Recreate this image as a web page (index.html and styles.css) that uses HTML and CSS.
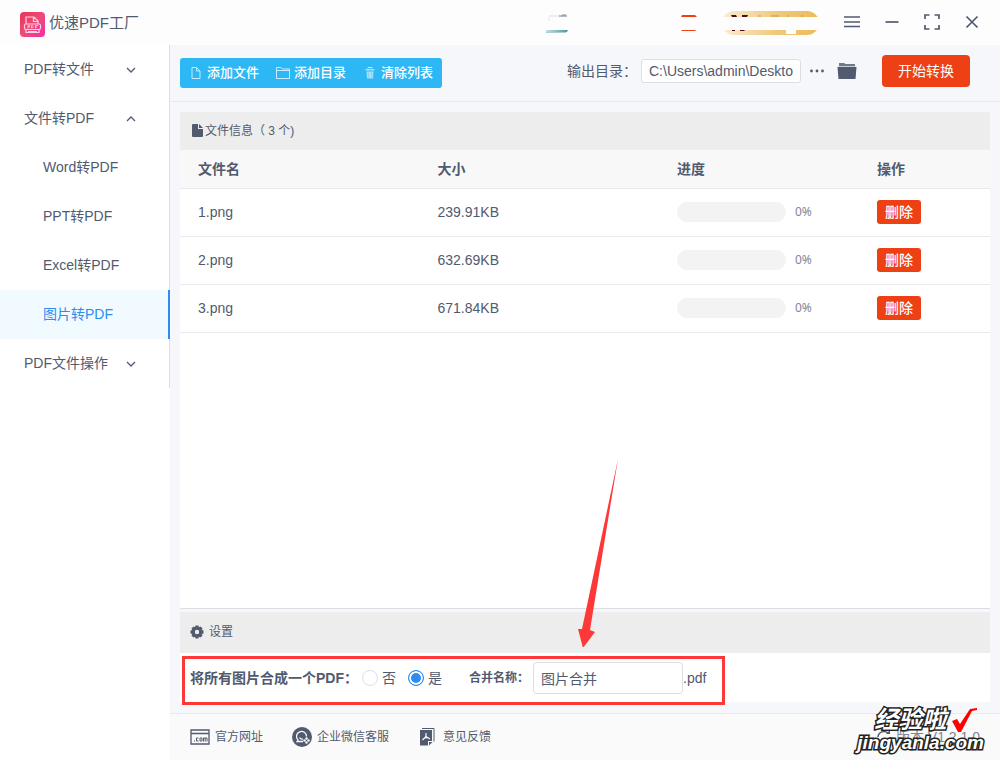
FILE: index.html
```html
<!DOCTYPE html>
<html lang="zh-CN">
<head>
<meta charset="utf-8">
<title>优速PDF工厂</title>
<link rel="stylesheet" href="styles.css">
</head>
<body>
<div class="app">
  <header class="titlebar">
    <svg class="logo" width="25" height="25" viewBox="0 0 25 25" aria-hidden="true">
      <defs><linearGradient id="lg" x1="0" y1="0" x2="1" y2="1"><stop offset="0" stop-color="#ea3458"/><stop offset=".5" stop-color="#ee4a78"/><stop offset="1" stop-color="#ee2fae"/></linearGradient></defs>
      <rect width="25" height="25" rx="4" fill="url(#lg)"/>
      <g fill="none" stroke="#fbd3de" stroke-width="1.2">
        <path d="M6 12V5h8l4 4v3M13.500 5v4.500H18"/>
        <rect x="4.500" y="12" width="16" height="5.500" rx="1.500"/>
        <path d="M6 17.500v3h13v-3M8 19.500h9"/>
        <path d="M8 16.500v-3h1.500v1.500H8M11.500 13.500v2.500h1l.8-1.200-.8-1.300zM15.500 16.500v-3H18M15.500 15H17" stroke-width=".8"/>
      </g>
    </svg>
    <h1 class="app-name">优速PDF工厂</h1>
    <svg class="promo" width="275" height="26" viewBox="0 0 275 26" aria-hidden="true">
      <defs>
        <linearGradient id="gold"><stop offset="0" stop-color="#fbedd2"/><stop offset=".55" stop-color="#f0c97e"/><stop offset="1" stop-color="#edbb58"/></linearGradient>
        <linearGradient id="teal"><stop offset="0" stop-color="#c4dde0"/><stop offset="1" stop-color="#4d979e"/></linearGradient>
      </defs>
      <rect x="177" y="1" width="97" height="24" rx="12" fill="url(#gold)"/>
      <path d="M186 5h5l1 2h-5zM197 5h6l-1 2h-5zM187 20h3v1h-3zM195 20h5l-1 1h-4z" fill="#4a1014"/>
      <path d="M213 6h3M226 6h8M242 6h2M256 6h2" stroke="#c09b58"/>
      <path d="M4 6h18" stroke="#d9dde2"/><path d="M14 6h8M17 5h4" stroke="#7f8a9b"/>
      <path d="M4 7v4" stroke="#e5e5e5"/>
      <path d="M1 20h22l-1 2H1z" fill="url(#teal)"/><path d="M1 22.500h20" stroke="#a9cdd0"/>
      <path d="M137 5h13l2 2h-16zM136 20h15l-1 1h-13z" fill="#ee4213"/>
      <path d="M136 7h139v13H136zM241 19h10v5h-10z" fill="#fdfdfd"/>
    </svg>
    <div class="window-controls">
      <button type="button" class="win-btn" aria-label="菜单"><svg width="16" height="16" viewBox="0 0 16 16"><path d="M0 3h16M0 8h16M0 12.500h16" /></svg></button>
      <button type="button" class="win-btn" aria-label="最小化"><svg width="16" height="16" viewBox="0 0 16 16"><path d="M1.500 8h13"/></svg></button>
      <button type="button" class="win-btn" aria-label="最大化"><svg width="16" height="16" viewBox="0 0 16 16"><path d="M1 5V1h4.500M10.500 1H15v4M15 11v4h-4.500M5.500 15H1v-4"/></svg></button>
      <button type="button" class="win-btn" aria-label="关闭"><svg width="16" height="16" viewBox="0 0 16 16"><path d="M2.500 2.500l11 11M13.500 2.500l-11 11"/></svg></button>
    </div>
  </header>

  <div class="body">
    <aside class="sidebar">
      <nav class="menu">
        <a class="menu-item" href="#">PDF转文件<svg class="chevron" width="10" height="6" viewBox="0 0 10 6"><path d="M1 1l4 4 4-4"/></svg></a>
        <a class="menu-item" href="#">文件转PDF<svg class="chevron" width="10" height="6" viewBox="0 0 10 6"><path d="M1 5l4-4 4 4"/></svg></a>
        <a class="menu-item sub" href="#">Word转PDF</a>
        <a class="menu-item sub" href="#">PPT转PDF</a>
        <a class="menu-item sub" href="#">Excel转PDF</a>
        <a class="menu-item sub active" href="#">图片转PDF</a>
        <a class="menu-item" href="#">PDF文件操作<svg class="chevron" width="10" height="6" viewBox="0 0 10 6"><path d="M1 1l4 4 4-4"/></svg></a>
      </nav>
    </aside>

    <main class="main">
      <div class="toolbar">
        <div class="btn-group">
          <button type="button" class="tool-btn"><svg width="14" height="14" viewBox="0 0 14 14"><path d="M3 1.500h4.500L11 5v7.500H3zM7.500 1.500V5H11"/></svg>添加文件</button>
          <button type="button" class="tool-btn"><svg width="14" height="14" viewBox="0 0 14 14"><path d="M.5 12.500v-11H5l1.500 1.500h7v9.500zM.5 4.500h13"/></svg>添加目录</button>
          <button type="button" class="tool-btn"><svg width="14" height="14" viewBox="0 0 14 14"><path d="M5 2.500V1.500h4v1" /><path d="M2.500 3h9v1.500h-9zM3.500 5.500h7l-.5 7H4z" fill="#a5dffa" stroke="none"/><path d="M5.500 6.500v5M8.500 6.500v5" stroke="#7dd2f9" stroke-width=".8"/></svg>清除列表</button>
        </div>
        <div class="output">
          <label class="output-label" for="outdir">输出目录：</label>
          <input class="path-input" id="outdir" type="text" value="C:\Users\admin\Deskto">
          <button type="button" class="icon-btn dots" aria-label="选择目录"><svg width="16" height="16" viewBox="0 0 16 16"><circle cx="2.500" cy="8" r="1.400"/><circle cx="8" cy="8" r="1.400"/><circle cx="13.500" cy="8" r="1.400"/></svg></button>
          <button type="button" class="icon-btn folder" aria-label="打开目录"><svg width="20" height="18" viewBox="0 0 20 18"><path d="M2 1h5l1.500 1H18v2H2z" opacity=".8"/><path d="M.5 5h19l-1 12h-17z"/><path d="M1.500 4.500h17" stroke="#a9aebb" stroke-width=".6"/></svg></button>
          <button type="button" class="start-btn">开始转换</button>
        </div>
      </div>

      <div class="content">
        <section class="files">
          <h2 class="panel-title"><svg class="file-icon" width="11" height="13" viewBox="0 0 11 13"><path d="M1 0h5v5h5v7a1 1 0 0 1-1 1H1a1 1 0 0 1-1-1V1a1 1 0 0 1 1-1z"/><path d="M7 0l4 4H7z"/></svg><span>文件信息（ 3 个)</span></h2>
          <table class="file-table">
            <thead><tr><th>文件名</th><th>大小</th><th class="col-progress">进度</th><th class="col-action">操作</th></tr></thead>
            <tbody>
              <tr><td>1.png</td><td>239.91KB</td><td><div class="progress"><span class="bar"></span><span class="pct">0%</span></div></td><td><button type="button" class="del-btn">删除</button></td></tr>
              <tr><td>2.png</td><td>632.69KB</td><td><div class="progress"><span class="bar"></span><span class="pct">0%</span></div></td><td><button type="button" class="del-btn">删除</button></td></tr>
              <tr><td>3.png</td><td>671.84KB</td><td><div class="progress"><span class="bar"></span><span class="pct">0%</span></div></td><td><button type="button" class="del-btn">删除</button></td></tr>
            </tbody>
          </table>
        </section>

        <section class="settings">
          <h2 class="panel-title settings-title"><svg width="14" height="14" viewBox="0 0 14 14"><path fill-rule="evenodd" d="M5.500.5h3l.4 1.800 1.600-.9 2.100 2.100-.9 1.600 1.800.4v3l-1.800.4.9 1.600-2.100 2.100-1.600-.9-.4 1.800h-3l-.4-1.800-1.600.9-2.100-2.100.9-1.600L.5 8.500v-3l1.800-.4-.9-1.600 2.100-2.100 1.600.9zM7 4.800a2.200 2.200 0 1 0 0 4.400 2.200 2.200 0 0 0 0-4.400z"/></svg><span>设置</span></h2>
          <form class="options">
            <fieldset class="merge">
              <legend>将所有图片合成一个PDF：</legend>
              <label class="radio"><input type="radio" name="merge" value="no"><span>否</span></label>
              <label class="radio"><input type="radio" name="merge" value="yes" checked><span>是</span></label>
            </fieldset>
            <label class="name-label" for="outname">合并名称：</label>
            <input class="name-input" id="outname" type="text" value="图片合并">
            <span class="ext">.pdf</span>
            <span class="highlight"></span>
            <svg class="arrow" width="44" height="190" viewBox="0 0 44 190" aria-hidden="true"><path d="M42 2L14 173l5 2-12 16-5-19h4z" fill="#fd3838"/></svg>
          </form>
        </section>
      </div>

      <footer class="footer">
        <a class="foot-link" href="#"><svg width="20" height="20" viewBox="0 0 20 20"><path d="M1 3h18v14H1zM1 6.500h18" fill="none" stroke="#515a6e" stroke-width="1.300"/><g fill="none" stroke="#515a6e"><path d="M4 14h1M8.500 11H6.500v3h2M10 11h2v3h-2zM13.500 14.500V11h3.500v3.500M15.200 11v3.500"/></g></svg><span>官方网址</span></a>
        <a class="foot-link service" href="#"><svg width="20" height="20" viewBox="0 0 20 20"><circle cx="10" cy="10" r="10"/><g fill="none" stroke="#fafafa" stroke-width="1.300"><path d="M11 14.500H5l1-1.500a5 5 0 1 1 8.500-3.500"/><path d="M7.500 10.500a3 3 0 0 0 3.500 1.500"/></g><g fill="#fafafa"><circle cx="14.500" cy="11.500" r="1.200"/><circle cx="12.500" cy="13.500" r="1.200"/><circle cx="16.500" cy="13.500" r="1.200"/><circle cx="14.500" cy="15.500" r="1.200"/></g></svg><span>企业微信客服</span></a>
        <a class="foot-link feedback" href="#"><svg width="16" height="20" viewBox="0 0 16 20"><path d="M3 1.500h12v13" fill="none" stroke="#515a6e"/><path d="M1 3h12v11H9v4.500H1z"/><path d="M10 18.500v-3.500h3.500z"/><path d="M7 6v3.500L3.500 13M7 9.500l4 2.500M4.500 12c1-1.500 3.500-1.500 5-1" fill="none" stroke="#fafafa" stroke-width="1.200"/></svg><span>意见反馈</span></a>
        <span class="version"><svg width="16" height="16" viewBox="0 0 16 16"><path d="M2 8a6 6 0 0 1 10-4M14 8a6 6 0 0 1-10 4" fill="none" stroke="#515a6e" stroke-width="1.500"/><path d="M10 5h4V1z"/></svg>版本 V1.2.1.0</span>
      </footer>
    </main>
  </div>
  <div class="watermark">
    <div class="mark-top"><span>经验啦</span><svg width="26" height="24" viewBox="0 0 26 24" aria-hidden="true"><path d="M1 13l5-2 3 5L19 1l7-1v2l-5 1L10 24H7z" fill="#f00"/></svg></div>
    <div class="mark-url">jingyanla.com</div>
  </div>
</div>
</body>
</html>
```
FILE: styles.css
```css
* { box-sizing: border-box; }

body {
  margin: 0;
  font-family: "Liberation Sans", "Noto Sans CJK SC", sans-serif;
  font-size: 14px;
  line-height: 20px;
  color: #515a6e;
  background: #fff;
}

button, input { font: inherit; color: inherit; }
button { border: 0; padding: 0; background: none; }
a { color: inherit; text-decoration: none; }
svg { display: block; flex: none; fill: #515a6e; }

.app { position: relative; display: flex; flex-direction: column; min-height: 100vh; }

.titlebar { display: flex; align-items: center; height: 45px; padding: 0 8px 0 20px; background: #fdfdfd; }
.logo { margin-top: 3px; }
.app-name { margin: 0 0 0 4px; font-size: 15px; font-weight: 400; }
.promo { margin-left: auto; margin-right: 12px; }
.window-controls { display: flex; padding-bottom: 2px; }
.win-btn { display: flex; align-items: center; justify-content: center; width: 40px; height: 40px; }
.win-btn svg { fill: none; stroke: #515a6e; stroke-width: 1.7; }

.body { display: flex; flex: 1; }

.sidebar { flex: none; width: 170px; background: #fff; }
.menu { border-right: 1px solid #dcdee2; }
.menu-item { display: flex; align-items: center; justify-content: space-between; height: 49px; padding: 0 33px 2px 24px; }
.menu-item.sub { padding-left: 43px; }
.menu-item.active { margin-right: -1px; color: #2d8cf0; background: #f0faff; border-right: 2px solid #2d8cf0; }
.chevron { margin-top: 2px; fill: none; stroke: #515a6e; stroke-width: 1.3; }

.main { flex: 1; min-width: 0; display: flex; flex-direction: column; background: #f5f7fa; }

.toolbar { display: flex; align-items: center; justify-content: space-between; height: 57px; padding: 0 30px 0 10px; border-bottom: 1px solid #e8eaec; }
.btn-group { display: flex; padding-right: 1px; background: #2db7f5; border-radius: 3px; }
.tool-btn { display: flex; align-items: center; justify-content: flex-end; gap: 4px; width: 87px; height: 30px; padding-right: 8px; font-size: 13px; font-weight: 500; color: #fff; }
.tool-btn svg { fill: none; stroke: #c8ecfd; }
.output { display: flex; align-items: center; padding-bottom: 4px; }
.path-input { width: 160px; height: 24px; margin-left: 4px; padding: 0 7px; border: 1px solid #dcdee2; border-radius: 3px; background: #fff; }
.dots { margin-left: 8px; }
.folder { margin-left: 12px; }
.start-btn { width: 88px; height: 32px; margin-left: 25px; border-radius: 4px; background: #ed4014; color: #fff; }

.content { flex: 1; display: flex; flex-direction: column; gap: 3px; padding: 10px 10px 11px; }
.files { flex: 1; background: #fff; border-bottom: 1px solid #dcdee2; }
.panel-title { display: flex; align-items: center; height: 38px; margin: 0; padding-left: 12px; gap: 2px; font-size: 12px; font-weight: 400; background: #ededed; }
.file-icon { margin-bottom: 2px; }

.file-table { width: 100%; border-collapse: collapse; table-layout: fixed; }
.file-table th { height: 38px; padding: 0 0 0 18px; text-align: left; font-weight: 700; background: #f8f8f9; border-bottom: 1px solid #e8eaec; }
.file-table td { height: 48px; padding: 0 0 0 18px; border-bottom: 1px solid #e8eaec; }
.file-table .col-progress { width: 200px; }
.file-table .col-action { width: 131px; }
.progress { display: flex; align-items: center; gap: 9px; }
.bar { width: 109px; height: 20px; border-radius: 10px; background: #f3f3f3; }
.pct { font-family: "Noto Sans", sans-serif; font-size: 12px; color: #808695; }
.del-btn { display: block; width: 44px; height: 24px; border-radius: 3px; background: #ed4014; color: #fff; font-weight: 500; }

.settings { background: #fff; }
.settings-title { height: 41px; padding: 0 0 2px 10px; gap: 5px; }
.options { position: relative; display: flex; align-items: center; height: 49px; padding: 1px 10px 0; }
.merge { display: flex; align-items: center; gap: 12px; margin: 0; padding: 0; border: 0; }
.merge legend { float: left; padding: 0; margin-right: -8px; font-weight: 700; }
.radio { display: flex; align-items: center; gap: 4px; }
.radio input { appearance: none; width: 16px; height: 16px; margin: 0; border: 1px solid #dcdee2; border-radius: 50%; background: #fff; }
.radio input:checked { border-color: #2d8cf0; background: #2d8cf0; box-shadow: inset 0 0 0 2px #fff; }
.name-label { margin-left: 27px; font-size: 12px; font-weight: 700; }
.name-input { width: 150px; height: 32px; margin-left: 4px; padding: 0 7px; border: 1px solid #dcdee2; border-radius: 4px; background: #fff; }
.highlight { position: absolute; left: 2px; top: 3px; width: 543px; height: 49px; border: 3px solid #fd3838; }
.arrow { position: absolute; left: 396px; bottom: 55px; }

.footer { display: flex; align-items: center; height: 47px; padding: 0 20px; border-top: 1px solid #e8eaec; background: #fafafa; font-size: 12px; }
.foot-link { display: flex; align-items: center; gap: 5px; }
.service { margin: 0 30px 0 29px; }
.feedback { gap: 8px; }
.version { display: flex; align-items: center; gap: 4px; margin-left: auto; font-size: 14px; color: #808695; }

.watermark { position: absolute; right: 16px; bottom: 6px; display: flex; flex-direction: column; color: #fff; font-style: italic; font-weight: 700; -webkit-text-stroke: 3px #222; paint-order: stroke fill; stroke-linejoin: round; }
.mark-top { display: flex; align-items: center; gap: 5px; padding-left: 17px; font-size: 24px; line-height: 24px; }
.mark-url { font-size: 19px; line-height: 22px; }
```
